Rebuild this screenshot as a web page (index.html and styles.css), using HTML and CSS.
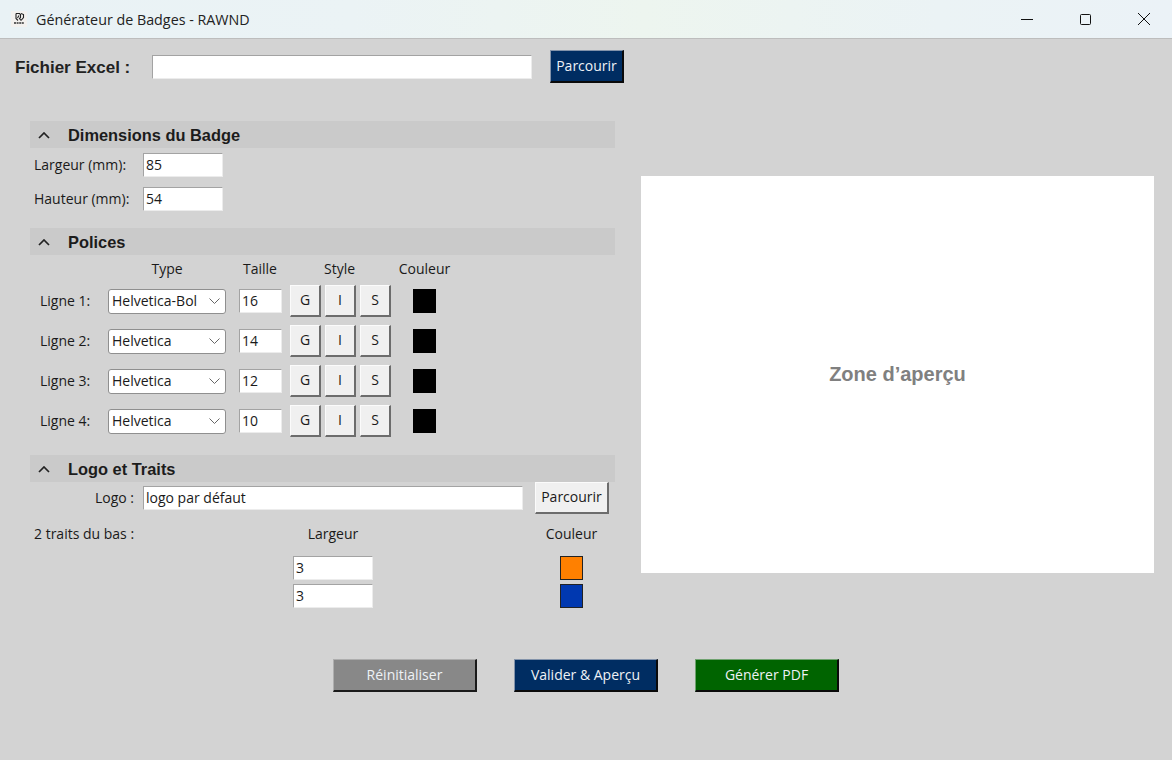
FILE: index.html
```html
<!DOCTYPE html>
<html lang="fr">
<head>
<meta charset="utf-8">
<title>Générateur de Badges - RAWND</title>
<link rel="stylesheet" href="styles.css">
</head>
<body>
<header class="titlebar">
  <svg class="app-icon" width="16" height="16" viewBox="0 0 16 16"><rect width="16" height="16" fill="#f3f1ee"/><path d="M5 2.5h3.5l1 1v3l-1 1 1.5 2M5 2.5v5l2 2M8 4.5 6.5 7M10 2.5l2.5 1v3l-2.5 3" fill="none" stroke="#222" stroke-width="1.1"/><path d="M3 12h10" stroke="#333" stroke-width="1.4" stroke-dasharray="2 .6"/></svg>
  <span class="title">Générateur de Badges - RAWND</span>
  <div class="win-controls">
    <svg width="12" height="12" viewBox="0 0 12 12"><path d="M0 6.5h12" stroke="#111" stroke-width="1"/></svg>
    <svg width="11" height="11" viewBox="0 0 11 11"><rect x=".5" y=".5" width="10" height="10" rx="1" fill="none" stroke="#111"/></svg>
    <svg width="12" height="12" viewBox="0 0 12 12"><path d="M0 0l12 12M12 0 0 12" stroke="#111" stroke-width="1"/></svg>
  </div>
</header>
<main class="app">
  <div class="file-row">
    <label class="file-label">Fichier Excel :</label>
    <input class="field file-input" type="text">
    <button class="btn-dark btn-browse navy">Parcourir</button>
  </div>
  <div class="content">
    <div class="left">
      <section>
        <h2 class="sec-head"><svg width="12" height="7" viewBox="0 0 12 7"><path d="M1 6l5-5 5 5" fill="none" stroke="#222" stroke-width="1.7"/></svg>Dimensions du Badge</h2>
        <div class="dim-rows">
          <div class="dim-row"><label class="dim-label">Largeur (mm):</label><input class="field dim-input" value="85"></div>
          <div class="dim-row"><label class="dim-label">Hauteur (mm):</label><input class="field dim-input" value="54"></div>
        </div>
      </section>
      <section class="sec-fonts">
        <h2 class="sec-head"><svg width="12" height="7" viewBox="0 0 12 7"><path d="M1 6l5-5 5 5" fill="none" stroke="#222" stroke-width="1.7"/></svg>Polices</h2>
        <div class="font-grid font-head">
          <span></span><span class="c">Type</span><span class="c">Taille</span><span class="style-head">Style</span><span class="color-head">Couleur</span>
        </div>
        <div class="font-rows">
          <div class="font-grid">
            <label class="line-label">Ligne 1:</label>
            <div class="select"><span class="select-text">Helvetica-Bol</span><svg width="11" height="6" viewBox="0 0 11 6"><path d="M.5.5l5 5 5-5" fill="none" stroke="#666"/></svg></div>
            <input class="field size-input" value="16">
            <div class="styles"><button class="btn-light tog">G</button><button class="btn-light tog">I</button><button class="btn-light tog">S</button></div>
            <span class="swatch black"></span>
          </div>
          <div class="font-grid">
            <label class="line-label">Ligne 2:</label>
            <div class="select"><span class="select-text">Helvetica</span><svg width="11" height="6" viewBox="0 0 11 6"><path d="M.5.5l5 5 5-5" fill="none" stroke="#666"/></svg></div>
            <input class="field size-input" value="14">
            <div class="styles"><button class="btn-light tog">G</button><button class="btn-light tog">I</button><button class="btn-light tog">S</button></div>
            <span class="swatch black"></span>
          </div>
          <div class="font-grid">
            <label class="line-label">Ligne 3:</label>
            <div class="select"><span class="select-text">Helvetica</span><svg width="11" height="6" viewBox="0 0 11 6"><path d="M.5.5l5 5 5-5" fill="none" stroke="#666"/></svg></div>
            <input class="field size-input" value="12">
            <div class="styles"><button class="btn-light tog">G</button><button class="btn-light tog">I</button><button class="btn-light tog">S</button></div>
            <span class="swatch black"></span>
          </div>
          <div class="font-grid">
            <label class="line-label">Ligne 4:</label>
            <div class="select"><span class="select-text">Helvetica</span><svg width="11" height="6" viewBox="0 0 11 6"><path d="M.5.5l5 5 5-5" fill="none" stroke="#666"/></svg></div>
            <input class="field size-input" value="10">
            <div class="styles"><button class="btn-light tog">G</button><button class="btn-light tog">I</button><button class="btn-light tog">S</button></div>
            <span class="swatch black"></span>
          </div>
        </div>
      </section>
      <section class="sec-logo">
        <h2 class="sec-head"><svg width="12" height="7" viewBox="0 0 12 7"><path d="M1 6l5-5 5 5" fill="none" stroke="#222" stroke-width="1.7"/></svg>Logo et Traits</h2>
        <div class="logo-row">
          <label class="logo-label">Logo :</label>
          <input class="field logo-input" value="logo par défaut">
          <button class="btn-light btn-logo">Parcourir</button>
        </div>
        <div class="traits">
          <span class="traits-label">2 traits du bas :</span><span class="traits-head">Largeur</span><span></span><span class="traits-head">Couleur</span>
          <span></span><input class="field trait-input" value="3"><span></span><span class="swatch orange"></span>
          <span></span><input class="field trait-input" value="3"><span></span><span class="swatch blue"></span>
        </div>
      </section>
    </div>
    <aside class="preview">Zone d’aperçu</aside>
  </div>
  <div class="actions">
    <button class="btn-dark action gray">Réinitialiser</button>
    <button class="btn-dark action navy">Valider &amp; Aperçu</button>
    <button class="btn-dark action green">Générer PDF</button>
  </div>
</main>
</body>
</html>
```
FILE: styles.css
```css
* { box-sizing: border-box; }
html, body { margin: 0; height: 100%; overflow: hidden; }
body {
  width: 1172px;
  height: 760px;
  background: #d3d3d3;
  font-family: "Open Sans", "Noto Sans", sans-serif;
  font-size: 14px;
  color: #1a1a1a;
}
button, input { font: inherit; color: inherit; margin: 0; }

.titlebar {
  height: 39px;
  display: flex;
  align-items: center;
  padding-left: 11px;
  background: linear-gradient(90deg, #e9f2f5 0%, #ebf3f5 30%, #edf5ef 55%, #ebf3f5 80%, #ebf2f7 100%);
  border-bottom: 1px solid #bdbdbd;
}
.app-icon { flex: none; }
.title { margin-left: 9px; font-size: 14.3px; color: #222; }
.win-controls {
  margin-left: auto;
  display: flex;
  align-items: center;
  gap: 47px;
  padding-right: 22px;
}
.win-controls svg { display: block; }

.file-row {
  margin-top: 11px;
  height: 33px;
  display: flex;
  align-items: center;
  padding-left: 15px;
}
.file-label {
  width: 137px;
  padding-top: 3px;
  font: bold 17px "Liberation Sans", Arial, sans-serif;
  color: #222;
}
.field {
  height: 24px;
  padding: 0 2px 2px;
  background: #fff;
  border: 1px solid;
  border-color: #a3a3a3 #ececec #ececec #a3a3a3;
  border-radius: 0;
  outline: none;
}
.file-input { width: 380px; }
.btn-browse { margin-left: 18px; width: 74px; height: 33px; }

.btn-dark {
  color: #eef2f6;
  border: 1px solid;
  border-color: #8393aa #0a0a0a #0a0a0a #8393aa;
  border-bottom-width: 2px;
  border-right-width: 2px;
  padding: 0 0 2px;
}
.navy { background: #002d62; }
.gray { background: #888888; border-color: #aeaeae #1a1a1a #1a1a1a #aeaeae; }
.green { background: #006400; border-color: #6fa26f #0a0a0a #0a0a0a #6fa26f; }

.btn-light {
  background: #f0f0f0;
  border: 1px solid;
  border-color: #fbfbfb #6c6c6c #6c6c6c #fbfbfb;
  border-bottom-width: 2px;
  border-right-width: 2px;
  padding: 0 0 2px;
}

.content { display: flex; align-items: flex-start; }
.left { margin: 38px 0 0 30px; width: 585px; }
.preview {
  margin: 93px 0 0 26px;
  width: 513px;
  height: 397px;
  background: #fff;
  display: flex;
  align-items: center;
  justify-content: center;
  font: bold 20px "Liberation Sans", Arial, sans-serif;
  color: #808080;
}

.sec-head {
  margin: 0;
  height: 27px;
  display: flex;
  align-items: center;
  gap: 18px;
  padding: 1px 0 0 8px;
  background: #cacaca;
  font: bold 16.4px "Liberation Sans", Arial, sans-serif;
  color: #1c1c1c;
}
.sec-fonts { margin-top: 17px; }
.sec-logo { margin-top: 18px; }

.dim-rows { display: flex; flex-direction: column; gap: 10px; margin-top: 5px; }
.dim-row { display: flex; align-items: center; padding-left: 4px; }
.dim-label { width: 109px; padding-bottom: 2px; }
.dim-input { width: 80px; }

.font-grid {
  display: grid;
  grid-template-columns: 78px 118px 56px 131px 23px;
  align-items: center;
}
.font-grid > :nth-child(3) { margin-left: 13px; }
.font-head { height: 30px; padding-bottom: 4px; }
.font-head > :nth-child(3) { margin-left: 12px; }
.font-rows { display: flex; flex-direction: column; gap: 8px; }
.c { text-align: center; }
.style-head { margin-left: 42px; }
.color-head { justify-self: center; white-space: nowrap; }
.line-label { padding: 0 0 2px 10px; }
.select {
  height: 25px;
  width: 118px;
  display: flex;
  align-items: center;
  justify-content: space-between;
  padding: 0 5px 0 3px;
  background: #fff;
  border: 1px solid #8f8f8f;
  border-radius: 3px;
}
.select-text { width: 90px; padding-bottom: 2px; white-space: nowrap; overflow: hidden; }
.size-input { width: 43px; }
.styles { display: flex; gap: 4px; margin-left: 8px; }
.tog { width: 31px; height: 32px; }
.swatch { display: block; width: 23px; height: 24px; }
.black { background: #000; }
.orange { background: #ff8000; border: 1px solid #222; }
.blue { background: #0038b0; border: 1px solid #222; }

.logo-row { height: 32px; display: flex; align-items: center; }
.logo-label { width: 104px; padding-bottom: 2px; text-align: right; }
.logo-input { margin-left: 9px; width: 380px; }
.btn-logo { margin-left: 12px; width: 74px; height: 32px; }

.traits {
  display: grid;
  grid-template-columns: 263px 80px 159px 79px;
  grid-template-rows: 30px 24px 24px;
  row-gap: 4px;
  margin-top: 8px;
  align-items: center;
  justify-items: center;
}
.traits-label { justify-self: start; align-self: start; padding-left: 4px; line-height: 24px; }
.traits-head { align-self: start; line-height: 24px; }
.trait-input { width: 80px; }

.actions {
  margin-top: 51px;
  display: flex;
  justify-content: center;
  gap: 37px;
}
.action { width: 144px; height: 33px; }
```
